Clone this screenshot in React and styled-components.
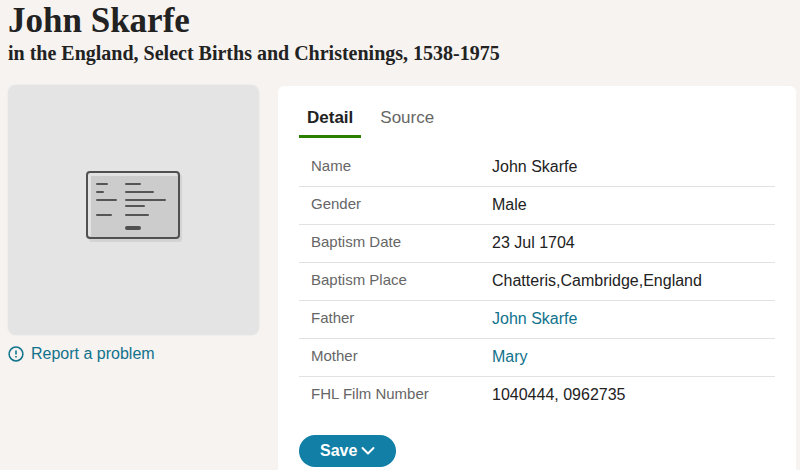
import React, { useState } from 'react'
import styled, { createGlobalStyle } from 'styled-components'

const facts = [
  { label: 'Name', value: 'John Skarfe' },
  { label: 'Gender', value: 'Male' },
  { label: 'Baptism Date', value: '23 Jul 1704' },
  { label: 'Baptism Place', value: 'Chatteris,Cambridge,England' },
  { label: 'Father', value: 'John Skarfe', link: true },
  { label: 'Mother', value: 'Mary', link: true },
  { label: 'FHL Film Number', value: '1040444, 0962735' }
]

const RecordIcon = () => (
  <svg width="100" height="76" viewBox="0 0 100 76" fill="none" aria-hidden="true">
    <rect x="5" y="5" width="93" height="68" rx="3" fill="#d3d3d3" />
    <rect x="3" y="3" width="92" height="66" rx="3" fill="#cccccc" />
    <path d="M5.5 67V5.5H93" stroke="#e2e2e2" strokeWidth="3" />
    <rect x="3" y="3" width="92" height="66" rx="3" stroke="#505050" strokeWidth="2" />
    <path
      d="M13 15h10M13 23h6M13 31h19M13 46h14M42 15h14M42 23h27M42 31h39M42 37h18M42 46h22"
      stroke="#555"
      strokeWidth="2"
      strokeLinecap="round" />
    <path d="M43 59h12" stroke="#505050" strokeWidth="4" strokeLinecap="round" />
  </svg>
)

const AlertIcon = () => (
  <svg width="16" height="16" viewBox="0 0 16 16" fill="none" stroke="#11728c" aria-hidden="true">
    <circle cx="8" cy="8" r="6.9" strokeWidth="1.5" />
    <path d="M8 4.5v4M8 10v1.6" strokeWidth="1.6" />
  </svg>
)

const ChevronIcon = () => (
  <svg width="14" height="10" viewBox="0 0 14 10" fill="none" aria-hidden="true">
    <path d="M1.5 2L7 7.5L12.5 2" stroke="white" strokeWidth="2" strokeLinecap="round" strokeLinejoin="round" />
  </svg>
)

const App = () => {
  const [tab, setTab] = useState('Detail')

  return (
    <Page>
      <GlobalStyle />
      <Header>
        <Title>John Skarfe</Title>
        <Subtitle>in the England, Select Births and Christenings, 1538-1975</Subtitle>
      </Header>

      <Content>
        <aside>
          <Preview>
            <RecordIcon />
          </Preview>
          <ReportLink href="#report">
            <AlertIcon />
            Report a problem
          </ReportLink>
        </aside>

        <Card>
          <Tabs role="tablist">
            {['Detail', 'Source'].map((name) => (
              <Tab
                key={name}
                type="button"
                role="tab"
                aria-selected={tab === name}
                $active={tab === name}
                onClick={() => setTab(name)}>
                {name}
              </Tab>
            ))}
          </Tabs>

          <Facts>
            <tbody>
              {facts.map(({ label, value, link }) => (
                <tr key={label}>
                  <th scope="row">{label}</th>
                  <td>{link ? <a href="#person">{value}</a> : value}</td>
                </tr>
              ))}
            </tbody>
          </Facts>

          <SaveButton type="button">
            Save
            <ChevronIcon />
          </SaveButton>
        </Card>
      </Content>
    </Page>
  )
}

const GlobalStyle = createGlobalStyle`
* {
  box-sizing: border-box;
}

body {
  margin: 0;
  background-color: #f6f3f0;
  color: #222;
  font-family: 'Liberation Sans', Arial, sans-serif;
  font-size: 16px;
}

button {
  border: none;
  background-color: transparent;
  font-family: inherit;
  cursor: pointer;
}

a {
  color: #11728c;
  text-decoration: none;
}
`

const Page = styled.div`
  display: flex;
  flex-direction: column;
  min-height: 100vh;
  padding: 0 4px 0 8px;
`

const Header = styled.header`
  height: 85px;
  font-family: 'Liberation Serif', 'Times New Roman', serif;
`

const Title = styled.h1`
  margin: 0;
  font-size: 35px;
  line-height: 42px;
`

const Subtitle = styled.h2`
  margin: 0;
  font-size: 20px;
  line-height: 22px;
`

const Content = styled.main`
  flex: 1;
  display: grid;
  grid-template-columns: 251px 1fr;
  gap: 19px;
`

const Preview = styled.div`
  display: flex;
  align-items: center;
  justify-content: center;
  height: 250px;
  padding-bottom: 6px;
  border-radius: 8px;
  background-color: #e4e4e4;
  box-shadow: 0 0 2px #e4e4e4;
`

const ReportLink = styled.a`
  display: flex;
  align-items: center;
  gap: 7px;
  margin-top: 9px;
  line-height: 20px;
`

const Card = styled.section`
  margin-top: 1px;
  padding: 16px 21px 3px;
  border-radius: 6px 6px 0 0;
  background-color: white;
`

const Tabs = styled.div`
  display: flex;
  gap: 11px;
`

const Tab = styled.button`
  padding: 6px 8px 7px;
  border-bottom: 3px solid ${({ $active }) => ($active ? '#2b8000' : 'transparent')};
  color: ${({ $active }) => ($active ? '#222' : '#666')};
  font-size: 17px;
  font-weight: ${({ $active }) => ($active ? 700 : 400)};
  line-height: 20px;
`

const Facts = styled.table`
  width: 100%;
  margin-top: 11px;
  border-spacing: 0;
  table-layout: fixed;

  th, td {
    height: 38px;
    border-bottom: 1px solid #e2e2e2;
    line-height: 20px;
    text-align: left;
  }

  th {
    width: 193px;
    padding: 0 12px 4px;
    color: #666;
    font-size: 15px;
    font-weight: 400;
  }

  td {
    padding: 0 0 2px;
  }

  tr:last-child > * {
    border-bottom: none;
  }
`

const SaveButton = styled.button`
  display: flex;
  align-items: center;
  gap: 4px;
  height: 32px;
  margin-top: 20px;
  padding: 0 21px;
  border-radius: 16px;
  background-color: #127fa6;
  color: white;
  font-size: 16px;
  font-weight: 700;
`

export default App
